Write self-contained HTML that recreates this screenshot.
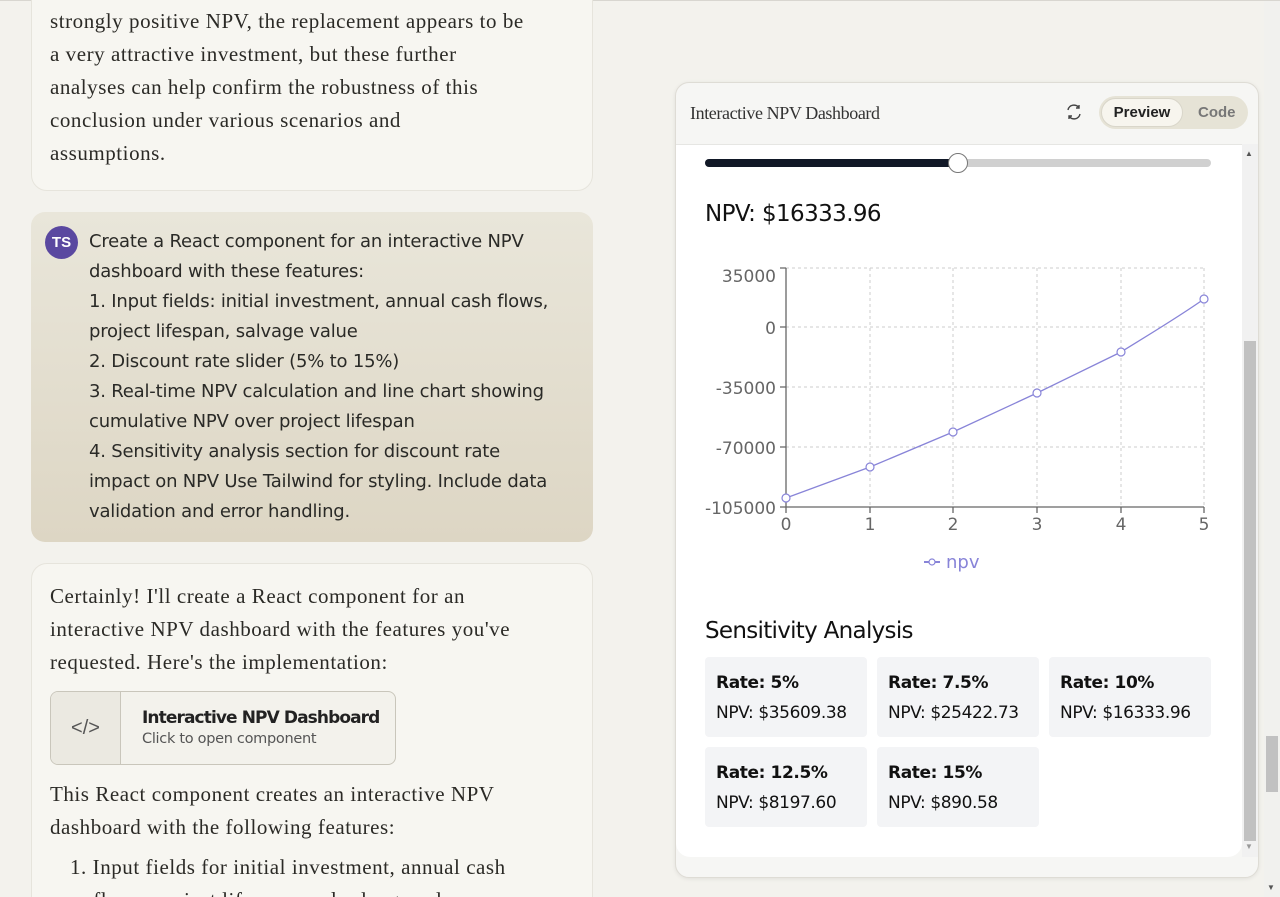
<!DOCTYPE html>
<html style="height:897px;overflow:hidden"><head><meta charset="utf-8"><style>
*{box-sizing:border-box;margin:0;padding:0}
body{width:1280px;height:897px;overflow:hidden;background:#f3f2ed;position:relative;font-family:"Liberation Sans",sans-serif;border-top:1px solid #d8d6d0}
.serif{font-family:"Liberation Serif",serif;color:#2b2a26}
.card{position:absolute;left:31px;width:562px;background:#f7f6f1;border:1px solid #e6e4dc;border-radius:16px}
.p{position:absolute;font-size:21px;line-height:33px;letter-spacing:0.55px;white-space:nowrap}
.user{position:absolute;left:31px;top:211px;width:562px;height:330px;border-radius:14px;background:linear-gradient(#e9e6da,#ddd6c4)}
.av{position:absolute;left:45px;top:225px;width:33px;height:33px;border-radius:50%;background:#5a48a0;color:#fff;font-weight:bold;font-size:15px;text-align:center;line-height:33px}
.ut{position:absolute;left:89px;top:226px;font-size:18px;line-height:30px;color:#2a2a27;font-family:"DejaVu Sans","Liberation Sans",sans-serif;letter-spacing:-0.2px;white-space:nowrap}
.art{position:absolute;left:50px;top:690px;width:346px;height:74px;border:1px solid #c9c6bb;border-radius:8px;background:#f3f2ec;overflow:hidden}
.panel{position:absolute;left:675px;top:81px;width:584px;height:796px;border:1px solid #dedcd5;border-radius:14px;background:#f6f6f4;overflow:hidden;box-shadow:0 1px 4px rgba(0,0,0,.08)}
.box{position:absolute;width:162px;height:80px;background:#f3f4f6;border-radius:4px;font-family:"DejaVu Sans",sans-serif;font-size:17px;color:#111;padding:11px 0 0 11px;line-height:30px;letter-spacing:-0.4px}
</style></head><body>
<div class="card" style="top:-20px;height:210px"></div>
<div class="p serif" style="left:50px;top:4px">strongly positive NPV, the replacement appears to be<br>a very attractive investment, but these further<br>analyses can help confirm the robustness of this<br>conclusion under various scenarios and<br>assumptions.</div>
<div class="user"></div>
<div class="av">TS</div>
<div class="ut">Create a React component for an interactive NPV<br>dashboard with these features:<br>1. Input fields: initial investment, annual cash flows,<br>project lifespan, salvage value<br>2. Discount rate slider (5% to 15%)<br>3. Real-time NPV calculation and line chart showing<br>cumulative NPV over project lifespan<br>4. Sensitivity analysis section for discount rate<br>impact on NPV Use Tailwind for styling. Include data<br>validation and error handling.</div>
<div class="card" style="top:562px;height:360px"></div>
<div class="p serif" style="left:50px;top:579px">Certainly! I'll create a React component for an<br>interactive NPV dashboard with the features you've<br>requested. Here's the implementation:</div>
<div class="art"><div style="position:absolute;left:0;top:0;width:70px;height:74px;border-right:1px solid #c9c6bb;background:#ebe9e1;text-align:center;line-height:72px;font-size:20px;color:#555">&lt;/&gt;</div>
<div style="position:absolute;left:91px;top:16px;font-weight:bold;font-size:17px;color:#222;font-family:'DejaVu Sans',sans-serif;letter-spacing:-0.9px">Interactive NPV Dashboard</div>
<div style="position:absolute;left:91px;top:39px;font-size:14.5px;color:#555;font-family:'DejaVu Sans',sans-serif;letter-spacing:-0.3px">Click to open component</div></div>
<div class="p serif" style="left:50px;top:777px">This React component creates an interactive NPV<br>dashboard with the following features:</div>
<div class="p serif" style="left:70px;top:850px">1. Input fields for initial investment, annual cash<br>&nbsp;&nbsp;&nbsp;&nbsp;flows, project lifespan, and salvage value</div>
<div class="panel">
<div style="position:absolute;left:14px;top:20px;font-family:'Liberation Serif',serif;font-size:18px;color:#333;letter-spacing:-0.4px">Interactive NPV Dashboard</div>
<svg style="position:absolute;left:389px;top:20px" width="18" height="18" viewBox="0 0 18 18" fill="none" stroke="#444" stroke-width="1.4"><path d="M3 7a6 6 0 0 1 11-2M14 2v3h-3M15 11a6 6 0 0 1-11 2M4 16v-3h3"/></svg>
<div style="position:absolute;left:423px;top:13px;width:149px;height:33px;border-radius:17px;background:#e6e3d6"></div>
<div style="position:absolute;left:425px;top:15px;width:82px;height:29px;border-radius:15px;background:#f7f5ee;border:1px solid #d9d6ca;text-align:center;line-height:27px;font-weight:bold;font-size:15px;color:#222">Preview</div>
<div style="position:absolute;left:522px;top:21px;font-weight:bold;font-size:15px;color:#777">Code</div>
<div style="position:absolute;left:0;top:61px;width:566px;height:713px;background:#fff;border-top:1px solid #e6e6e3;border-radius:0 0 14px 14px;overflow:hidden">
<div style="position:absolute;left:29px;top:14px;width:506px;height:8px;border-radius:4px;background:#d0d0d0"></div>
<div style="position:absolute;left:29px;top:14px;width:253px;height:8px;border-radius:4px;background:#111827"></div>
<div style="position:absolute;left:272px;top:8px;width:20px;height:20px;border-radius:50%;background:#fff;border:1px solid #777"></div>
<div style="position:absolute;left:29px;top:56px;font-family:'DejaVu Sans',sans-serif;font-size:23px;color:#111;letter-spacing:-0.6px">NPV: $16333.96</div>
<div style="position:absolute;left:29px;top:473px;font-family:'DejaVu Sans',sans-serif;font-size:23px;color:#111;letter-spacing:-0.7px">Sensitivity Analysis</div>
<div class="box" style="left:29px;top:512px"><b>Rate: 5%</b><br>NPV: $35609.38</div>
<div class="box" style="left:201px;top:512px"><b>Rate: 7.5%</b><br>NPV: $25422.73</div>
<div class="box" style="left:373px;top:512px"><b>Rate: 10%</b><br>NPV: $16333.96</div>
<div class="box" style="left:29px;top:602px"><b>Rate: 12.5%</b><br>NPV: $8197.60</div>
<div class="box" style="left:201px;top:602px"><b>Rate: 15%</b><br>NPV: $890.58</div>
</div>
<div style="position:absolute;left:566px;top:61px;width:16px;height:713px;background:#f1f1f1"></div>
<div style="position:absolute;left:568px;top:258px;width:12px;height:500px;background:#c1c1c1"></div>
<div style="position:absolute;left:569px;top:66px;font-size:8px;color:#555">▲</div>
<div style="position:absolute;left:569px;top:759px;font-size:8px;color:#999">▼</div>
</div>
<svg style="position:absolute;left:0;top:0" width="1280" height="897" font-family="DejaVu Sans,sans-serif">
<g stroke="#ccc" stroke-dasharray="3 3" stroke-width="1">
<path d="M786 267H1204M786 326H1204M786 386H1204M786 446H1204M870 267V506M953 267V506M1037 267V506M1121 267V506M1204 267V506"/></g>
<g stroke="#666" stroke-width="1.3" fill="none"><path d="M786 267V506H1204M780 267H786M780 326H786M780 386H786M780 446H786M780 506H786M786 506v6M870 506v6M953 506v6M1037 506v6M1121 506v6M1204 506v6"/></g>
<g fill="#666" font-size="17" text-anchor="end"><text x="776" y="281">35000</text><text x="776" y="333">0</text><text x="776" y="393">-35000</text><text x="776" y="453">-70000</text><text x="776" y="513">-105000</text></g>
<g fill="#666" font-size="17" text-anchor="middle"><text x="786" y="529">0</text><text x="870" y="529">1</text><text x="953" y="529">2</text><text x="1037" y="529">3</text><text x="1121" y="529">4</text><text x="1204" y="529">5</text></g>
<path d="M786 497L870 466L953 431L1037 392L1121 351C1150 333 1180 315 1204 298" stroke="#8884d8" stroke-width="1.3" fill="none"/>
<g fill="#fff" stroke="#8884d8" stroke-width="1.2"><circle cx="786" cy="497" r="4"/><circle cx="870" cy="466" r="4"/><circle cx="953" cy="431" r="4"/><circle cx="1037" cy="392" r="4"/><circle cx="1121" cy="351" r="4"/><circle cx="1204" cy="298" r="4"/>
<path d="M924 561H940" stroke-width="2"/><circle cx="932" cy="561" r="3"/></g>
<text x="946" y="567" fill="#8884d8" font-size="18">npv</text>
</svg>
<div style="position:absolute;left:1264px;top:0;width:16px;height:897px;background:#f1f1ee"></div>
<div style="position:absolute;left:1266px;top:735px;width:12px;height:56px;background:#c1c1c1"></div>
<div style="position:absolute;left:1267px;top:882px;font-size:8px;color:#555">▼</div>
</body></html>
